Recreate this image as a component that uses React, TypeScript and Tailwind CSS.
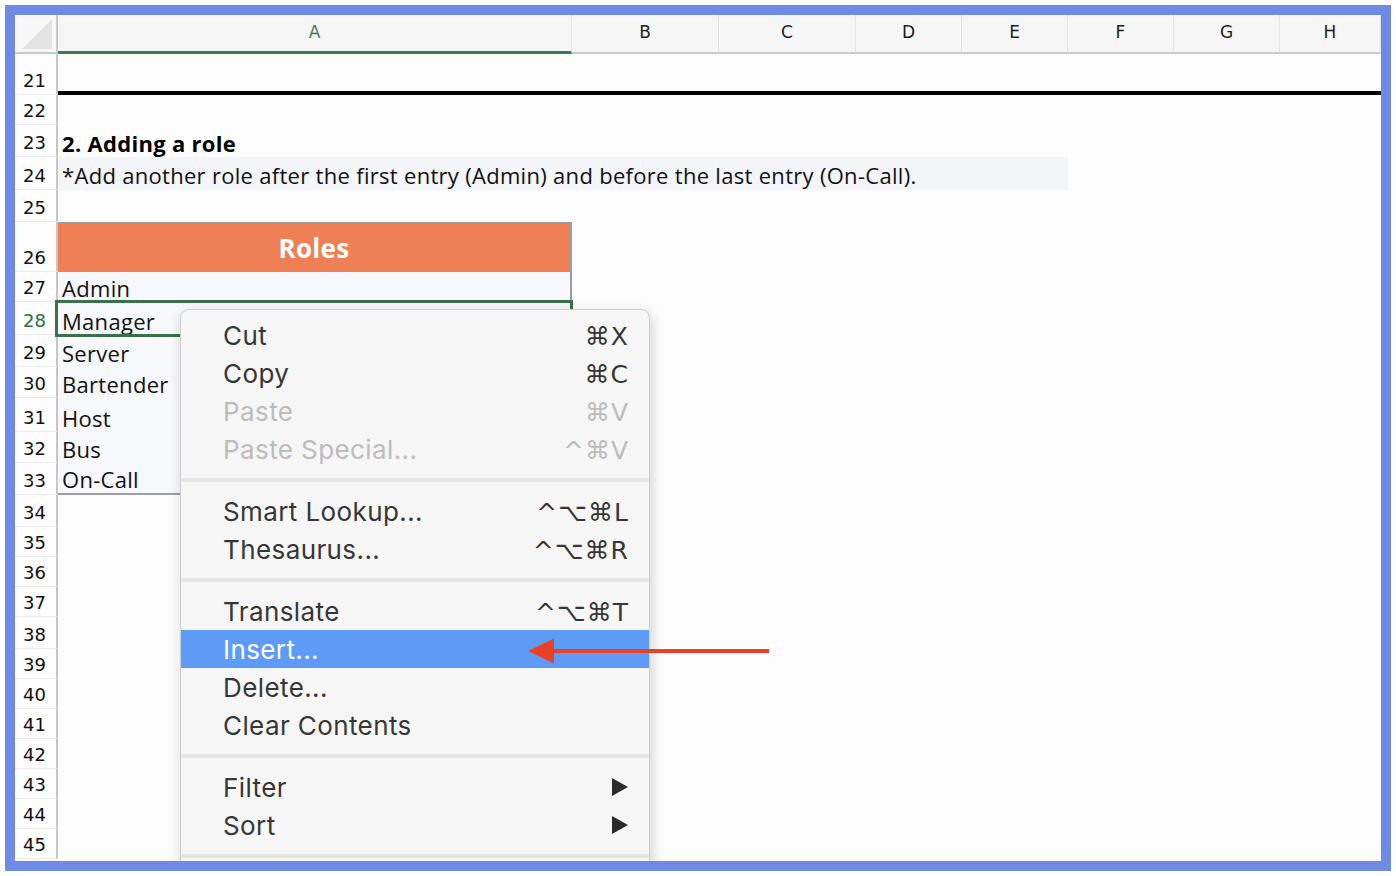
import type { ReactNode } from 'react';

const ROWS: { n: number; h: number }[] = [
  { n: 21, h: 41 },
  { n: 22, h: 30 },
  { n: 23, h: 32 },
  { n: 24, h: 33 },
  { n: 25, h: 32 },
  { n: 26, h: 50 },
  { n: 27, h: 30 },
  { n: 28, h: 33 },
  { n: 29, h: 32 },
  { n: 30, h: 31 },
  { n: 31, h: 34 },
  { n: 32, h: 31 },
  { n: 33, h: 32 },
  { n: 34, h: 32 },
  { n: 35, h: 30 },
  { n: 36, h: 30 },
  { n: 37, h: 30 },
  { n: 38, h: 32 },
  { n: 39, h: 30 },
  { n: 40, h: 30 },
  { n: 41, h: 30 },
  { n: 42, h: 30 },
  { n: 43, h: 30 },
  { n: 44, h: 30 },
  { n: 45, h: 30 },
];

const COLUMNS = [
  { label: 'A', w: 'w-[514px]' },
  { label: 'B', w: 'w-[147px]' },
  { label: 'C', w: 'w-[137px]' },
  { label: 'D', w: 'w-[106px]' },
  { label: 'E', w: 'w-[106px]' },
  { label: 'F', w: 'w-[106px]' },
  { label: 'G', w: 'w-[106px]' },
  { label: 'H', w: 'flex-1' },
];

const ROLES = ['Admin', 'Manager', 'Server', 'Bartender', 'Host', 'Bus', 'On-Call'];

const sheetFont = "font-['Open_Sans','Lato',sans-serif] tracking-[0.3px]";
const headFont = "font-['DejaVu_Sans','Open_Sans',sans-serif]";

function ColumnHeader() {
  return (
    <div className="flex h-[39px] shrink-0 bg-[#f6f6f6]">
      <div className="relative w-[43px] shrink-0 border-r-2 border-b-2 border-[#c9c9c9] bg-[#f7f7f7]">
        <svg className="absolute left-[7px] top-[3px]" width="31" height="32" viewBox="0 0 31 32">
          <polygon points="0,31 30,1 30,31" fill="#e3e3e3" />
        </svg>
      </div>
      {COLUMNS.map((c) => {
        const active = c.label === 'A';
        return (
          <div
            key={c.label}
            className={`${c.w} shrink-0 flex items-center justify-center pb-[1px] text-[17px] ${headFont} border-r border-[#e2e2e2] ${
              active ? 'border-b-[3px] border-b-[#3b7a4f] text-[#3b7a4f]' : 'border-b-2 border-b-[#c9c9c9] text-[#1d1d1d]'
            }`}
          >
            {c.label}
          </div>
        );
      })}
    </div>
  );
}

function RowNumber({ n, active }: { n: number; active: boolean }) {
  return (
    <div
      className={`w-[43px] shrink-0 flex items-end justify-center pb-[3px] pr-[2px] border-r-2 border-[#c6c6c6] border-b border-b-[#ececec] text-[18px] leading-5 ${headFont} ${
        active ? 'text-[#2f6f43]' : 'text-[#111]'
      }`}
    >
      {n}
    </div>
  );
}

function cellA(n: number): ReactNode {
  if (n === 21) {
    return <div className="flex-1 border-b-4 border-black" />;
  }
  if (n === 23) {
    return (
      <div className={`flex-1 flex items-end pl-[4px] pb-[2px] text-[22px] leading-6 font-bold text-black ${sheetFont}`}>
        2. Adding a role
      </div>
    );
  }
  if (n === 24) {
    return (
      <div className="flex-1 flex">
        <div className={`w-[1010px] bg-[#f3f5f9] flex items-end pl-[4px] pb-[3px] text-[22px] leading-6 text-[#111] whitespace-nowrap ${sheetFont}`}>
          *Add another role after the first entry (Admin) and before the last entry (On-Call).
        </div>
      </div>
    );
  }
  if (n === 26) {
    return (
      <div className="flex-1 flex">
        <div className={`w-[514px] bg-[#ef7f55] border-t-2 border-r-2 border-[#9d9d9d] flex items-center justify-center text-[26px] font-bold text-white ${sheetFont}`}>
          Roles
        </div>
      </div>
    );
  }
  if (n >= 27 && n <= 33) {
    const role = ROLES[n - 27];
    return (
      <div className="flex-1 flex">
        <div
          className={`relative w-[514px] bg-[#f6f8fc] border-r-2 border-[#9d9d9d] flex items-end pl-[4px] pb-[2px] text-[22px] leading-6 text-[#111] ${sheetFont} ${
            n === 33 ? 'border-b-2' : ''
          }`}
        >
          {role}
          {n === 28 && (
            <div className="absolute z-10 -left-[3px] -top-[2px] -right-[3px] -bottom-[2px] border-[3px] border-[#3a7149]" />
          )}
        </div>
      </div>
    );
  }
  return <div className="flex-1" />;
}

type MenuItem =
  | { kind: 'sep' }
  | { kind: 'item'; label: string; keys?: string; disabled?: boolean; active?: boolean; sub?: boolean };

const MENU: MenuItem[] = [
  { kind: 'item', label: 'Cut', keys: '⌘X' },
  { kind: 'item', label: 'Copy', keys: '⌘C' },
  { kind: 'item', label: 'Paste', keys: '⌘V', disabled: true },
  { kind: 'item', label: 'Paste Special...', keys: '^⌘V', disabled: true },
  { kind: 'sep' },
  { kind: 'item', label: 'Smart Lookup...', keys: '^⌥⌘L' },
  { kind: 'item', label: 'Thesaurus...', keys: '^⌥⌘R' },
  { kind: 'sep' },
  { kind: 'item', label: 'Translate', keys: '^⌥⌘T' },
  { kind: 'item', label: 'Insert...', active: true },
  { kind: 'item', label: 'Delete...' },
  { kind: 'item', label: 'Clear Contents' },
  { kind: 'sep' },
  { kind: 'item', label: 'Filter', sub: true },
  { kind: 'item', label: 'Sort', sub: true },
  { kind: 'sep' },
];

function ContextMenu() {
  return (
    <div className="absolute z-20 left-[165px] top-[294px] w-[470px] h-[600px] rounded-t-[9px] bg-[#f6f6f6] border border-[#cfcfcf] shadow-[2px_4px_14px_rgba(0,0,0,0.18)] pt-[6px] font-['Inter','Noto_Sans',sans-serif]">
      {MENU.map((m, i) => {
        if (m.kind === 'sep') {
          return (
            <div key={i} className="h-[24px] flex items-center">
              <div className="w-full h-[4px] bg-[#e4e4e4]" />
            </div>
          );
        }
        const color = m.active ? 'bg-[#5e9bf7] text-white' : m.disabled ? 'text-[#bcbcbc]' : 'text-[#363636]';
        return (
          <div key={i} className={`h-[38px] flex items-center justify-between pl-[42px] pr-[20px] text-[26px] tracking-[0.4px] ${color}`}>
            <span>{m.label}</span>
            {m.keys && (
              <span className="pt-[3px] font-['DejaVu_Sans','Inter',sans-serif] text-[25px] tracking-[1px]">{m.keys}</span>
            )}
            {m.sub && (
              <svg width="18" height="20" viewBox="0 0 18 20">
                <polygon points="1,1 17,10 1,19" fill="#2b2b2b" />
              </svg>
            )}
          </div>
        );
      })}
    </div>
  );
}

function Arrow() {
  return (
    <svg className="absolute z-30 left-[513px] top-[623px]" width="242" height="26" viewBox="0 0 242 26">
      <line x1="22" y1="13" x2="241" y2="13" stroke="#ea4126" strokeWidth="4" />
      <polygon points="0,13 26,0.5 26,25.5" fill="#ea4126" />
    </svg>
  );
}

export default function App() {
  return (
    <div className="w-[1396px] h-[876px] bg-white p-[5px]">
      <div className="relative w-full h-full border-[10px] border-[#6f8ae2] bg-[#fdfdfd] overflow-hidden flex flex-col">
        <ColumnHeader />
        {ROWS.map((r) => (
          <div key={r.n} className="flex shrink-0" style={{ height: r.h }}>
            <RowNumber n={r.n} active={r.n === 28} />
            {cellA(r.n)}
          </div>
        ))}
        <ContextMenu />
        <Arrow />
      </div>
    </div>
  );
}
